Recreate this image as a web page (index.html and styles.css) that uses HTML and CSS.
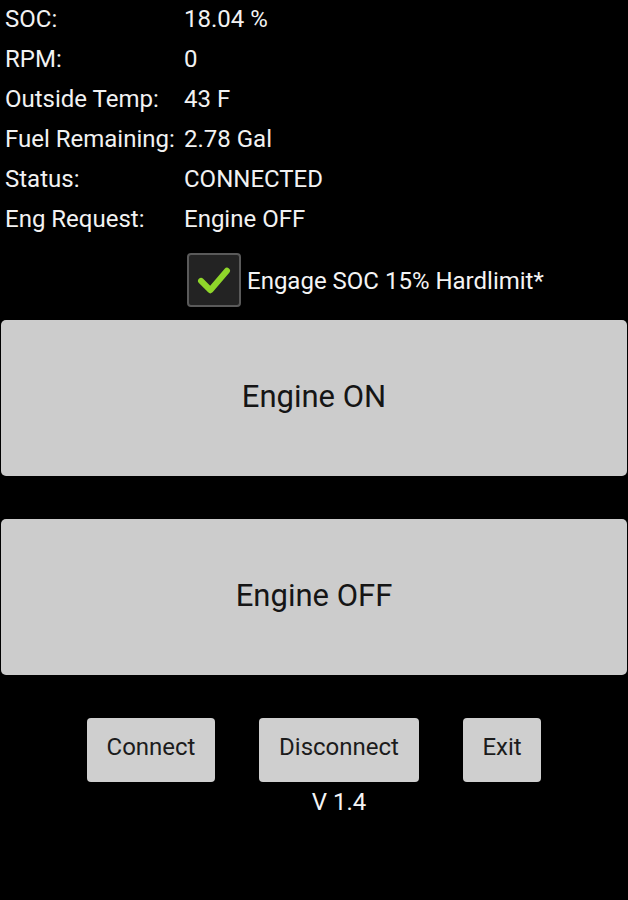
FILE: index.html
```html
<!DOCTYPE html>
<html>
<head>
<meta charset="utf-8">
<link rel="stylesheet" href="styles.css">
</head>
<body>
<div class="app">
  <div class="info">
    <div class="row"><span class="label">SOC:</span><span class="value">18.04 %</span></div>
    <div class="row"><span class="label">RPM:</span><span class="value">0</span></div>
    <div class="row"><span class="label">Outside Temp:</span><span class="value">43 F</span></div>
    <div class="row"><span class="label">Fuel Remaining:</span><span class="value">2.78 Gal</span></div>
    <div class="row"><span class="label">Status:</span><span class="value">CONNECTED</span></div>
    <div class="row"><span class="label">Eng Request:</span><span class="value">Engine OFF</span></div>
  </div>
  <div class="check-row">
    <span class="checkbox">
      <svg viewBox="0 0 54 54" width="54" height="54">
        <path d="M13 28 L23 38 L41 17" fill="none" stroke="#8fd62a" stroke-width="6.5" stroke-linecap="round" stroke-linejoin="round"/>
      </svg>
    </span>
    <span class="check-label">Engage SOC 15% Hardlimit*</span>
  </div>
  <button class="big-btn btn-on">Engine ON</button>
  <button class="big-btn btn-off">Engine OFF</button>
  <div class="small-row">
    <button class="small-btn btn-connect">Connect</button>
    <div class="mid-col">
      <button class="small-btn btn-disconnect">Disconnect</button>
      <div class="version">V 1.4</div>
    </div>
    <button class="small-btn btn-exit">Exit</button>
  </div>
</div>
</body>
</html>
```
FILE: styles.css
```css
html, body {
  margin: 0;
  padding: 0;
  background: #000;
}
body {
  width: 628px;
  height: 900px;
  overflow: hidden;
  font-family: Roboto, "Noto Sans", sans-serif;
  color: #f2f2f2;
}
.app {
  display: flex;
  flex-direction: column;
}
.info {
  display: flex;
  flex-direction: column;
}
.row {
  display: flex;
  height: 40px;
  align-items: center;
  font-size: 24px;
  margin-top: -1px;
  margin-bottom: 1px;
}
.label {
  width: 179px;
  padding-left: 5px;
  white-space: nowrap;
}
.value {
  white-space: nowrap;
}
.check-row {
  display: flex;
  align-items: center;
  padding-left: 187px;
  margin-top: 13px;
  height: 54px;
}
.checkbox {
  width: 50px;
  height: 50px;
  border: 2px solid #5a5a5a;
  border-radius: 4px;
  background: #232323;
  display: flex;
  align-items: center;
  justify-content: center;
  box-sizing: content-box;
}
.checkbox svg {
  width: 50px;
  height: 50px;
}
.check-label {
  font-size: 24px;
  margin-left: 6px;
  margin-top: 2px;
  color: #f4f4f4;
}
.big-btn {
  display: block;
  width: 626px;
  margin-left: 1px;
  height: 156px;
  border: none;
  border-radius: 5px;
  background: #cccccc;
  color: #151515;
  font-family: Roboto, "Noto Sans", sans-serif;
  font-size: 31px;
  padding: 0 0 4px 0;
}
.btn-on {
  margin-top: 13px;
}
.btn-off {
  margin-top: 43px;
}
.small-row {
  display: flex;
  align-items: flex-start;
  margin-top: 43px;
  padding-left: 87px;
}
.small-btn {
  height: 64px;
  border: none;
  border-radius: 4px;
  background: #cfcfcf;
  color: #1c1c1c;
  font-family: Roboto, "Noto Sans", sans-serif;
  font-size: 24px;
  padding: 0;
  padding-bottom: 6px;
}
.btn-connect {
  width: 128px;
}
.mid-col {
  display: flex;
  flex-direction: column;
  align-items: center;
  margin-left: 44px;
}
.btn-disconnect {
  width: 160px;
}
.version {
  font-size: 24px;
  color: #f4f4f4;
  margin-top: 6px;
}
.btn-exit {
  width: 78px;
  margin-left: 44px;
}
```
